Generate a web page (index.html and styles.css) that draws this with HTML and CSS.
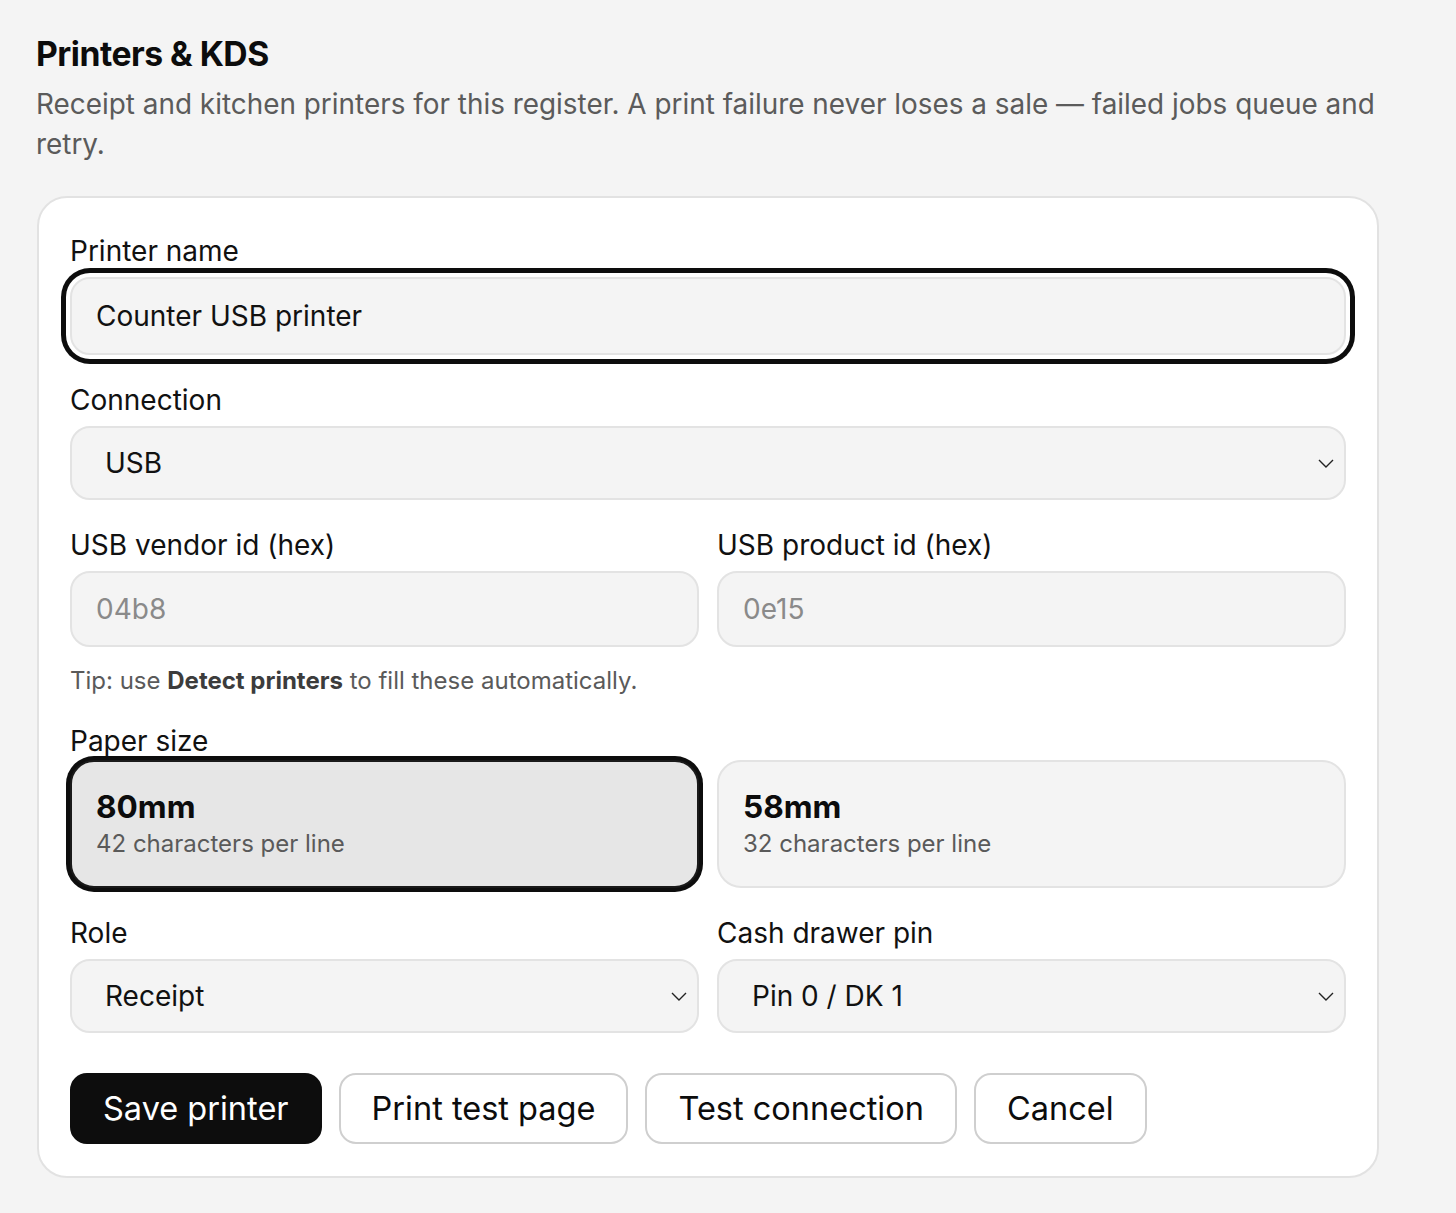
FILE: index.html
```html
<!DOCTYPE html>
<html lang="en">
<head>
<meta charset="utf-8">
<title>Printers &amp; KDS</title>
<link rel="stylesheet" href="styles.css">
</head>
<body>
<main class="page">
  <h1 class="title">Printers &amp; KDS</h1>
  <p class="intro">Receipt and kitchen printers for this register. A print failure never loses a sale — failed jobs queue and retry.</p>

  <form class="card">
    <div class="field">
      <label class="label">Printer name</label>
      <div class="input input-focus">Counter USB printer</div>
    </div>

    <div class="field">
      <label class="label">Connection</label>
      <div class="select">
        <span>USB</span>
        <svg class="chev" width="16" height="9" viewBox="0 0 16 9"><path d="M1 1l7 7 7-7" fill="none" stroke="#222" stroke-width="1.4"/></svg>
      </div>
    </div>

    <div class="field">
      <div class="row">
        <div class="col">
          <label class="label">USB vendor id (hex)</label>
          <div class="input placeholder">04b8</div>
        </div>
        <div class="col">
          <label class="label">USB product id (hex)</label>
          <div class="input placeholder">0e15</div>
        </div>
      </div>
      <p class="tip">Tip: use <b>Detect printers</b> to fill these automatically.</p>
    </div>

    <div class="field">
      <label class="label label-tight">Paper size</label>
      <div class="row">
        <div class="paper paper-on">
          <div class="paper-title">80mm</div>
          <div class="paper-sub">42 characters per line</div>
        </div>
        <div class="paper">
          <div class="paper-title">58mm</div>
          <div class="paper-sub">32 characters per line</div>
        </div>
      </div>
    </div>

    <div class="field">
      <div class="row">
        <div class="col">
          <label class="label">Role</label>
          <div class="select">
            <span>Receipt</span>
            <svg class="chev" width="16" height="9" viewBox="0 0 16 9"><path d="M1 1l7 7 7-7" fill="none" stroke="#222" stroke-width="1.4"/></svg>
          </div>
        </div>
        <div class="col">
          <label class="label">Cash drawer pin</label>
          <div class="select">
            <span>Pin 0 / DK 1</span>
            <svg class="chev" width="16" height="9" viewBox="0 0 16 9"><path d="M1 1l7 7 7-7" fill="none" stroke="#222" stroke-width="1.4"/></svg>
          </div>
        </div>
      </div>
    </div>

    <div class="actions">
      <button type="button" class="btn btn-primary">Save printer</button>
      <button type="button" class="btn">Print test page</button>
      <button type="button" class="btn">Test connection</button>
      <button type="button" class="btn">Cancel</button>
    </div>
  </form>
</main>
</body>
</html>
```

FILE: styles.css
```css
* { box-sizing: border-box; }

html, body {
  margin: 0;
  background: #f4f4f4;
}

body {
  font-family: Inter, "Noto Sans", "Liberation Sans", sans-serif;
  color: #0c0c0c;
}

.page {
  width: 1352px;
  margin-left: 36px;
  padding-top: 33px;
}

.title {
  margin: 0;
  font-size: 33.7px;
  line-height: 42px;
  font-weight: 700;
  letter-spacing: -0.5px;
}

.intro {
  margin: 9px 0 0;
  font-size: 27.9px;
  line-height: 40px;
  color: #5b5b5b;
}

.card {
  margin-top: 32px;
  width: 1342px;
  margin-left: 1px;
  background: #fff;
  border: 2px solid #e2e2e2;
  border-radius: 30px;
  padding: 36px 31px 32px;
  display: flex;
  flex-direction: column;
  gap: 28px;
}

.field {
  display: flex;
  flex-direction: column;
}

.label {
  font-size: 28px;
  line-height: 34px;
  margin-bottom: 9px;
  color: #111;
}

.label-tight {
  margin-bottom: 2px;
}

.input,
.select {
  height: 76px;
  border: 2px solid #e3e3e3;
  border-radius: 20px;
  background: #f4f4f4;
  font-size: 28px;
  display: flex;
  align-items: center;
  padding: 0 24px;
  color: #111;
}

.input-focus {
  height: 78px;
  box-shadow: 0 0 0 4px #fff, 0 0 0 9px #0d0d0d;
}

.placeholder {
  color: #8a8a8a;
}

.select {
  height: 74px;
  padding: 0 10px 0 33px;
  justify-content: space-between;
}

.chev {
  display: block;
}

.row {
  display: grid;
  grid-template-columns: 1fr 1fr;
  gap: 18px;
}

.col {
  display: flex;
  flex-direction: column;
}

.tip {
  margin: 19px 0 0;
  font-size: 24px;
  line-height: 30px;
  color: #5a5a5a;
}

.tip b {
  color: #3c3c3c;
  font-weight: 700;
}

.paper {
  height: 128px;
  border: 2px solid #e3e3e3;
  border-radius: 24px;
  background: #f4f4f4;
  padding: 0 24px;
  display: flex;
  flex-direction: column;
  justify-content: center;
}

.paper-on {
  border-color: #1a1a1a;
  background: #e6e6e6;
  box-shadow: 0 0 0 4px #0d0d0d;
}

.paper-title {
  font-size: 31.6px;
  line-height: 40px;
  font-weight: 700;
  color: #0c0c0c;
}

.paper-sub {
  font-size: 24px;
  line-height: 34px;
  color: #5a5a5a;
}

.actions {
  display: flex;
  gap: 17px;
  margin-top: 12px;
}

.btn {
  height: 71px;
  padding: 0 31px;
  font-family: inherit;
  font-size: 32.5px;
  color: #0c0c0c;
  background: #fff;
  border: 2px solid #cfcfcf;
  border-radius: 17px;
  cursor: pointer;
}

.btn-primary {
  background: #0d0d0d;
  border-color: #0d0d0d;
  color: #fff;
}
```
